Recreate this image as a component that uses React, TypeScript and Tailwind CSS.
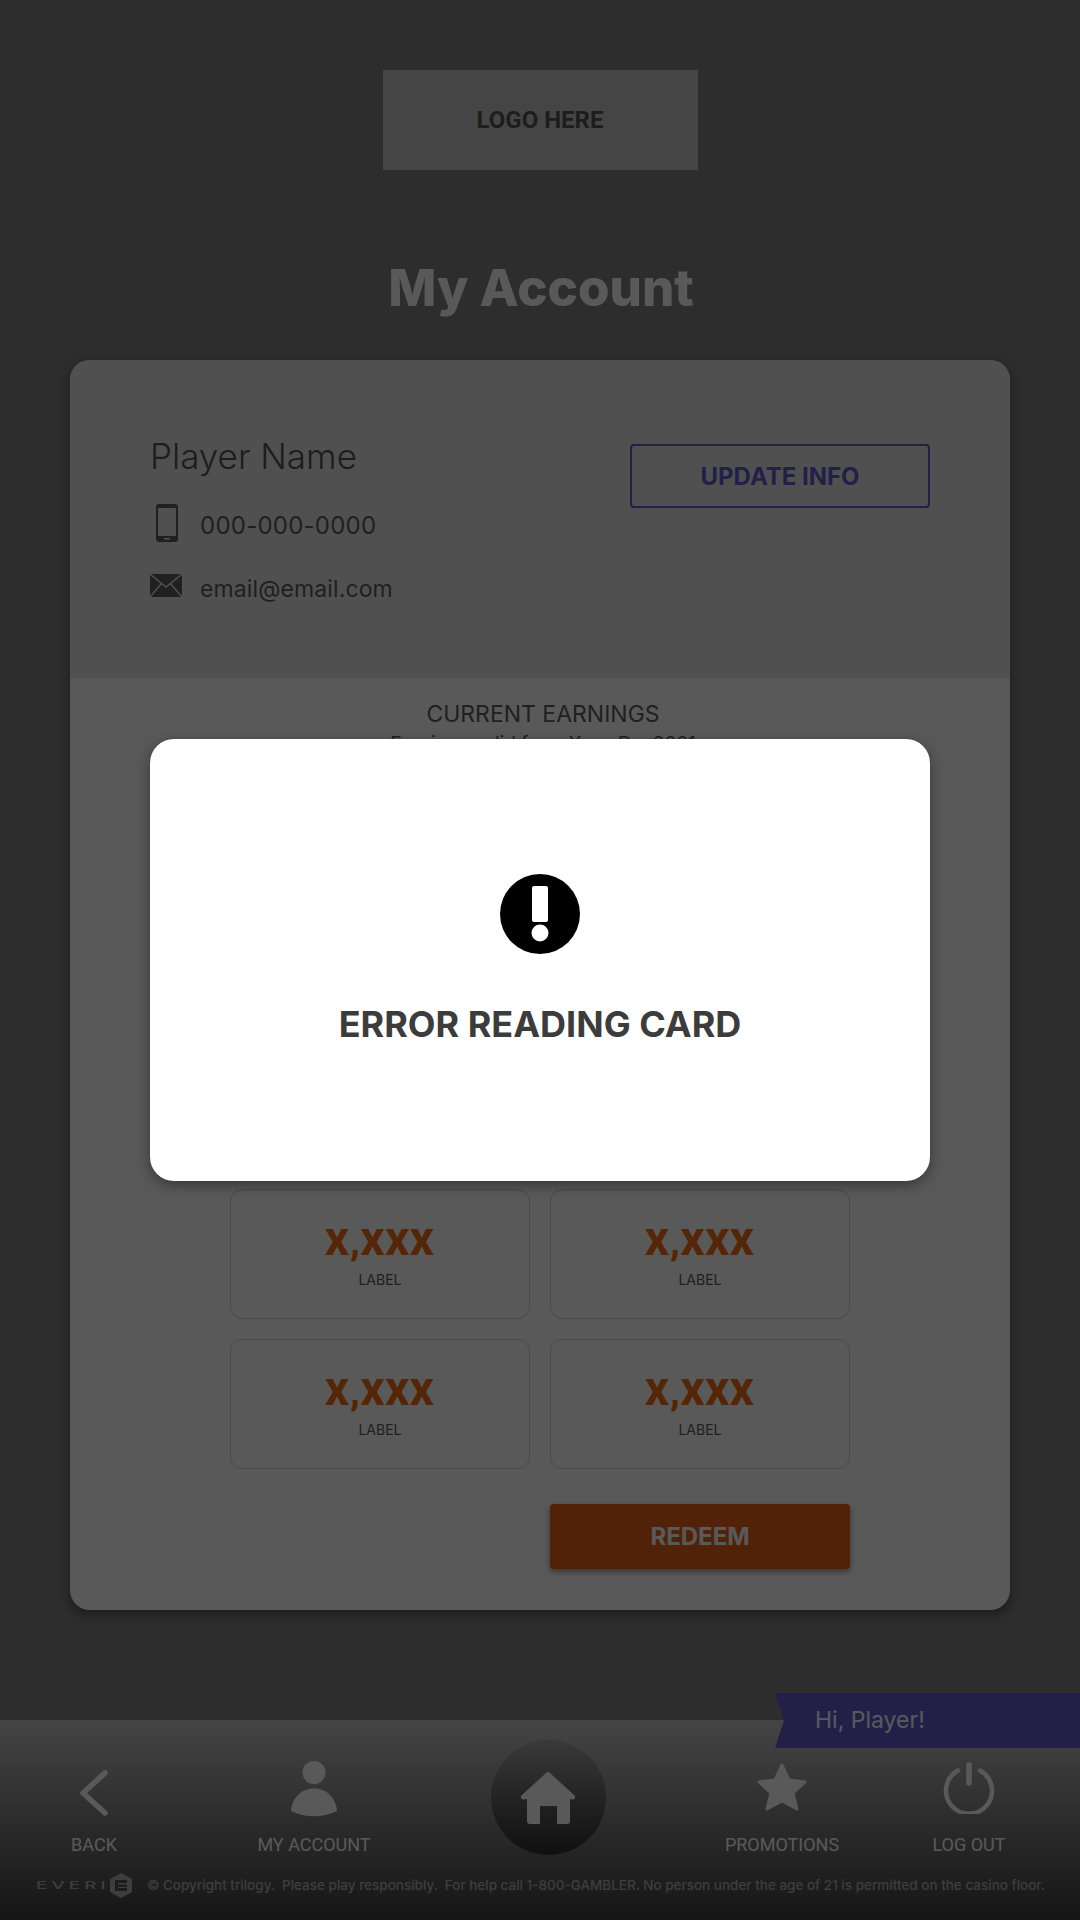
import type { ReactNode } from 'react';

const tiles = [0, 1, 2, 3];

function PhoneIcon() {
  return (
    <svg width="22" height="38" viewBox="0 0 22 38" className="shrink-0">
      <rect x="0" y="0" width="22" height="38" rx="3" fill="#5c5c5c" />
      <rect x="2" y="4" width="18" height="28" fill="#e5e5e5" />
      <rect x="8" y="34" width="6" height="1.5" fill="#e5e5e5" />
    </svg>
  );
}

function MailIcon() {
  return (
    <svg width="32" height="24" viewBox="0 0 32 24" className="mb-[6px] shrink-0">
      <rect width="32" height="23" fill="#5c5c5c" />
      <path d="M0 0 L16 13 L32 0 M0 23 L11.5 9.5 M32 23 L20.5 9.5" fill="none" stroke="#e5e5e5" strokeWidth="1.4" />
    </svg>
  );
}

function AlertIcon() {
  return (
    <svg width="80" height="80" viewBox="0 0 80 80">
      <circle cx="40" cy="40" r="40" fill="#000" />
      <rect x="32" y="12" width="16" height="36" rx="2" fill="#fff" />
      <circle cx="40" cy="59" r="8.5" fill="#fff" />
    </svg>
  );
}

function BackIcon() {
  return (
    <svg width="28" height="46" viewBox="0 0 28 46" className="mt-[8px]">
      <path d="M25 3 L3 23 L25 43" fill="none" stroke="#fff" strokeWidth="5.5" strokeLinecap="round" strokeLinejoin="round" />
    </svg>
  );
}

function PersonIcon() {
  return (
    <svg width="46" height="56" viewBox="0 0 46 56" fill="#fff">
      <circle cx="23" cy="11.5" r="11.5" />
      <path d="M0 50 C1 37 10 27.5 23 27.5 C36 27.5 45 37 46 50 C32 57 14 57 0 50 Z" />
    </svg>
  );
}

function HomeIcon() {
  return (
    <svg width="56" height="54" viewBox="0 0 56 54" fill="#fff">
      <path d="M26 2 a3 3 0 0 1 4 0 L54 24 a2.5 2.5 0 0 1 -2 4.5 L50 28 V50 a3 3 0 0 1 -3 3 H37 V35 H20 V53 H10 a3 3 0 0 1 -3 -3 V28 L4 28.5 a2.5 2.5 0 0 1 -2 -4.5 Z" />
    </svg>
  );
}

function StarIcon() {
  return (
    <svg width="52" height="50" viewBox="0 0 52 50" className="mb-[4px]">
      <path d="M26 3 L33 18 L49 20 L37 31 L41 47 L26 39 L11 47 L15 31 L3 20 L19 18 Z" fill="#fff" stroke="#fff" strokeWidth="3" strokeLinejoin="round" />
    </svg>
  );
}

function PowerIcon() {
  return (
    <svg width="52" height="52" viewBox="0 0 52 52" className="mb-[2px]">
      <path d="M15 8.5 A23 23 0 1 0 37 8.5" fill="none" stroke="#fff" strokeWidth="4.5" strokeLinecap="round" />
      <path d="M26 3 V21" fill="none" stroke="#fff" strokeWidth="5.5" strokeLinecap="round" />
    </svg>
  );
}

function NavItem({ icon, label }: { icon: ReactNode; label: string }) {
  return (
    <div className="flex flex-col items-center">
      <div className="flex h-[56px] items-center justify-center">{icon}</div>
      <span className="mt-[14px] font-['Roboto',sans-serif] text-[18px] leading-[28px] text-white">{label}</span>
    </div>
  );
}

export default function App() {
  return (
    <div className="relative flex h-[1920px] w-[1080px] flex-col items-center overflow-hidden bg-[#808080] font-['Inter',sans-serif]">
      <div className="mt-[70px] flex h-[100px] w-[315px] items-center justify-center bg-[#c5c5c5] font-['Roboto',sans-serif] text-[24px] font-bold text-[#555]">
        LOGO HERE
      </div>

      <h1 className="mt-[84px] ml-[2px] text-[51px] leading-[68px] font-extrabold text-white">My Account</h1>

      <div className="mt-[38px] h-[1250px] w-[940px] overflow-hidden rounded-[20px] bg-white shadow-[0_4px_12px_rgba(0,0,0,0.4)]">
        <div className="flex h-[318px] justify-between bg-[#e5e5e5] px-[80px] pt-[72px]">
          <div className="text-[#5c5c5c]">
            <div className="text-[35px] leading-[48px] font-light text-[#555]">Player Name</div>
            <div className="mt-[24px] flex h-[38px] items-start gap-[22px] pl-[6px]">
              <PhoneIcon />
              <span className="mt-[7px] text-[24px] leading-[30px] tracking-[0.01em]">000-000-0000</span>
            </div>
            <div className="mt-[28px] flex h-[38px] items-center gap-[18px]">
              <MailIcon />
              <span className="text-[23px] tracking-[0.005em]">email@email.com</span>
            </div>
          </div>
          <button className="mt-[12px] h-[64px] w-[300px] rounded-[4px] border-2 border-[#625dce] pt-[2px] text-[24px] font-bold text-[#625dce]">
            UPDATE INFO
          </button>
        </div>

        <div className="flex flex-col items-center px-[160px]">
          <div className="mt-[21px] ml-[6px] text-[23px] leading-[30px] text-[#5c5c5c]">CURRENT EARNINGS</div>
          <div className="mt-[1px] ml-[6px] text-[19px] leading-[28px] text-[#5c5c5c]">Earnings valid from Xxxx Dx, 2021</div>

          <div className="mt-[431px] grid w-[620px] grid-cols-2 gap-x-[20px] gap-y-[20px]">
            {tiles.map((tile) => (
              <div key={tile} className="flex h-[130px] flex-col items-center rounded-[12px] border border-[#cfcfcf]">
                <span className="mt-[28px] font-['Roboto',sans-serif] text-[37px] leading-[50px] font-black tracking-[1px] text-[#f06e12]">X,XXX</span>
                <span className="mt-[2px] text-[14px] leading-[20px] text-[#5c5c5c]">LABEL</span>
              </div>
            ))}
          </div>

          <div className="mt-[35px] flex w-[620px] justify-end">
            <button className="h-[65px] w-[300px] rounded-[4px] bg-[#e86214] text-[24px] font-bold text-white shadow-[0_3px_6px_rgba(0,0,0,0.4)]">
              REDEEM
            </button>
          </div>
        </div>
      </div>

      <footer className="relative mt-auto h-[200px] w-full bg-gradient-to-b from-[#c5c5c5] to-[#3f3f3f] pt-[41px]">
        <div className="absolute top-[-27px] right-0 flex h-[55px] w-[305px] items-center bg-[#625dce] pl-[40px] text-[23px] text-white [clip-path:polygon(0_0,100%_0,100%_100%,0_100%,9px_50%)]">
          Hi, Player!
        </div>

        <div className="grid grid-cols-[188px_252px_216px_252px_122px]">
          <NavItem icon={<BackIcon />} label="BACK" />
          <NavItem icon={<PersonIcon />} label="MY ACCOUNT" />
          <div className="flex justify-center">
            <div className="mt-[-21px] flex h-[115px] w-[115px] items-center justify-center rounded-full bg-gradient-to-b from-[#a5a5a5] to-[#2e2e2e]">
              <HomeIcon />
            </div>
          </div>
          <NavItem icon={<StarIcon />} label="PROMOTIONS" />
          <NavItem icon={<PowerIcon />} label="LOG OUT" />
        </div>

        <div className="mt-[16px] flex h-[20px] items-center pl-[36px] text-[#b0b0b0]">
          <span className="w-[74px] origin-left scale-x-[1.7] text-[11px] leading-none font-medium tracking-[0.22em]">EVERI</span>
          <svg width="22" height="25" viewBox="0 0 22 25" className="shrink-0">
            <polygon points="11,0 22,6 22,19 11,25 0,19 0,6" fill="#b0b0b0" />
            <path d="M5 7 H17 V10 H8 V11.5 H17 V14 H8 V15 H17 V18 H5 Z" fill="#505050" />
          </svg>
          <span className="ml-[15px] text-[13.5px] font-medium whitespace-pre">
            © Copyright trilogy.  Please play responsibly.  For help call 1-800-GAMBLER. No person under the age of 21 is permitted on the casino floor.
          </span>
        </div>
      </footer>

      <div className="absolute inset-0 flex justify-center bg-black/65 pt-[739px]">
        <div className="flex h-[442px] w-[780px] flex-col items-center rounded-[24px] bg-white pt-[135px] shadow-[0_4px_14px_rgba(0,0,0,0.4)]">
          <AlertIcon />
          <div className="mt-[45px] text-[36px] leading-[50px] font-bold text-[#3c3c3c]">ERROR READING CARD</div>
        </div>
      </div>
    </div>
  );
}
